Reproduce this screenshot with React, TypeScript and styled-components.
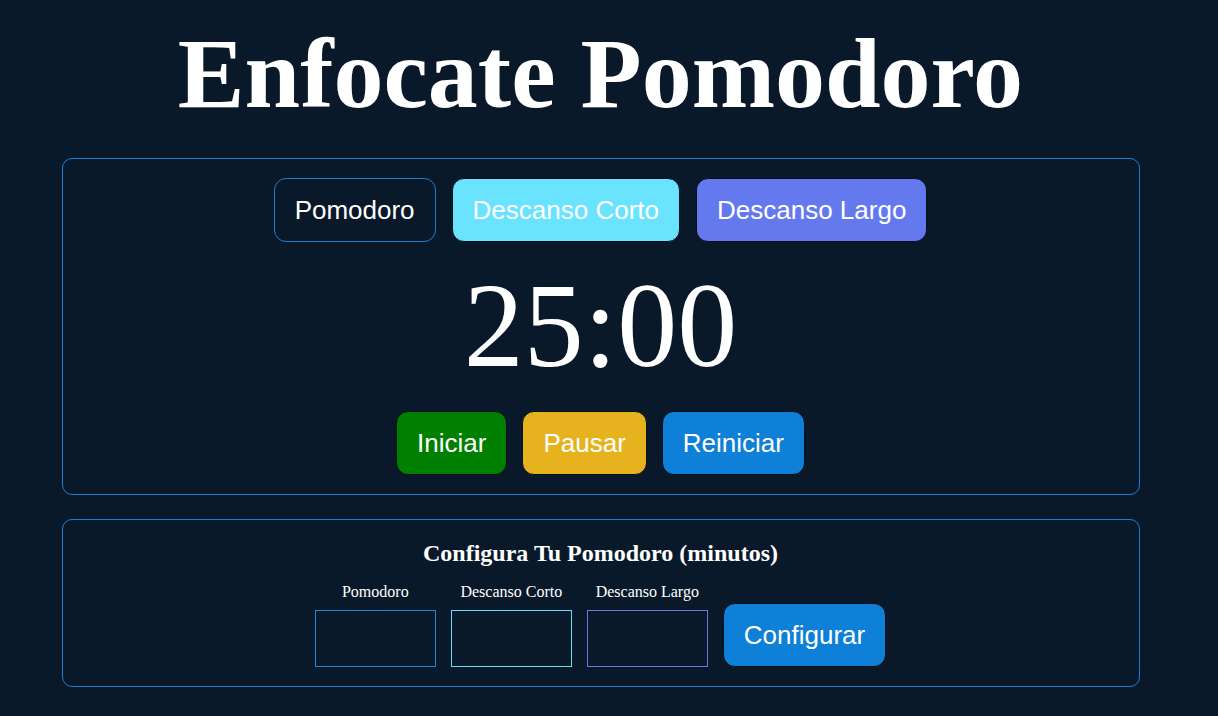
import styled, { createGlobalStyle } from "styled-components";

const GlobalStyle = createGlobalStyle`
  html, body {
    margin: 0;
    padding: 0;
    background: #0a192a;
  }
  body {
    font-family: "Liberation Serif", "Times New Roman", serif;
    color: #ffffff;
  }
`;

const modes = [
  { label: "Pomodoro", variant: "outline" },
  { label: "Descanso Corto", variant: "cyan" },
  { label: "Descanso Largo", variant: "violet" },
] as const;

const fields = [
  { label: "Pomodoro", border: "#1f86e0" },
  { label: "Descanso Corto", border: "#62def8" },
  { label: "Descanso Largo", border: "#6878f0" },
];

export default function App() {
  return (
    <>
      <GlobalStyle />
      <Page>
        <Title>Enfocate Pomodoro</Title>
        <Panel>
          <ButtonRow>
            {modes.map((m) => (
              <ModeButton key={m.label} $variant={m.variant}>
                {m.label}
              </ModeButton>
            ))}
          </ButtonRow>
          <Timer>25:00</Timer>
          <ButtonRow $gap={15}>
            <ActionButton $bg="#008000">Iniciar</ActionButton>
            <ActionButton $bg="#e6b31e">Pausar</ActionButton>
            <ActionButton $bg="#0e80d8">Reiniciar</ActionButton>
          </ButtonRow>
        </Panel>
        <ConfigPanel>
          <ConfigTitle>Configura Tu Pomodoro (minutos)</ConfigTitle>
          <FieldRow>
            {fields.map((f) => (
              <Field key={f.label}>
                <FieldLabel>{f.label}</FieldLabel>
                <FieldInput type="number" $border={f.border} />
              </Field>
            ))}
            <ActionButton $bg="#0e80d8">Configurar</ActionButton>
          </FieldRow>
        </ConfigPanel>
      </Page>
    </>
  );
}

const Page = styled.main`
  width: 1201px;
  display: flex;
  flex-direction: column;
  align-items: center;
  padding-bottom: 30px;
`;

const Title = styled.h1`
  margin: 16px 0 27px;
  font-size: 100px;
  font-weight: bold;
  line-height: 1.15;
  text-align: center;
`;

const Panel = styled.section`
  box-sizing: border-box;
  width: 1078px;
  border: 1px solid #1a7fd4;
  border-radius: 10px;
  padding: 19px 20px;
  display: flex;
  flex-direction: column;
  align-items: center;
`;

const ConfigPanel = styled(Panel)`
  margin-top: 24px;
`;

const ButtonRow = styled.div<{ $gap?: number }>`
  display: flex;
  justify-content: center;
  gap: ${({ $gap }) => $gap ?? 16}px;
`;

const modeColors = {
  outline: { bg: "transparent", border: "#1a7fd4" },
  cyan: { bg: "#6ae3ff", border: "#05101c" },
  violet: { bg: "#6479ee", border: "#05101c" },
};

const BaseButton = styled.button`
  box-sizing: border-box;
  height: 64px;
  font-family: "Liberation Sans", Arial, sans-serif;
  font-size: 26px;
  line-height: 30px;
  color: #ffffff;
  border-radius: 12px;
  padding: 16px 20px;
  cursor: pointer;
`;

const ModeButton = styled(BaseButton)<{ $variant: keyof typeof modeColors }>`
  background: ${({ $variant }) => modeColors[$variant].bg};
  border: 1px solid ${({ $variant }) => modeColors[$variant].border};
`;

const ActionButton = styled(BaseButton)<{ $bg: string }>`
  background: ${({ $bg }) => $bg};
  border: 1px solid #05101c;
`;

const Timer = styled.div`
  font-size: 120px;
  line-height: 138px;
  margin: 15px 0 16px;
`;

const ConfigTitle = styled.h2`
  margin: 0 0 16px;
  font-size: 24px;
  font-weight: bold;
  line-height: 28px;
`;

const FieldRow = styled.div`
  display: flex;
  align-items: flex-end;
  gap: 15px;
`;

const Field = styled.label`
  display: flex;
  flex-direction: column;
  align-items: center;
  gap: 9px;
`;

const FieldLabel = styled.span`
  font-size: 16px;
  line-height: 18px;
`;

const FieldInput = styled.input<{ $border: string }>`
  box-sizing: border-box;
  width: 121px;
  height: 57px;
  margin: 0;
  background: transparent;
  border: 1px solid ${({ $border }) => $border};
  color: #ffffff;
  font-size: 20px;
  outline: none;
  -moz-appearance: textfield;
  &::-webkit-outer-spin-button,
  &::-webkit-inner-spin-button {
    -webkit-appearance: none;
    margin: 0;
  }
`;
